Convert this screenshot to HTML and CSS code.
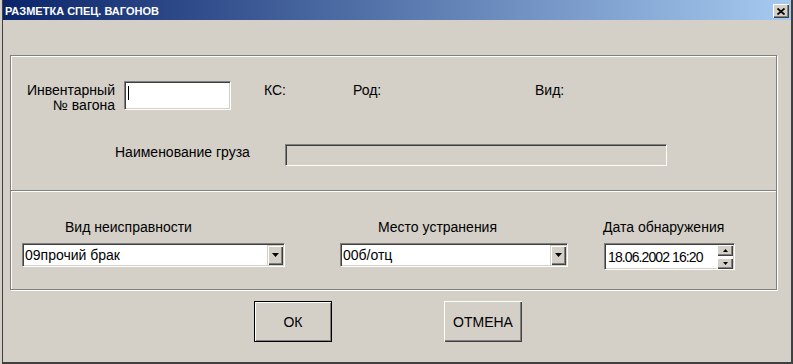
FILE: index.html
```html
<!DOCTYPE html>
<html lang="ru">
<head>
    <meta charset="UTF-8">
    <title>Разметка спец. вагонов</title>
    <link rel="stylesheet" href="styles.css">
</head>
<body>
    <div class="window">
        <div class="titlebar">
            <span class="title">РАЗМЕТКА СПЕЦ. ВАГОНОВ</span>
            <span class="close-btn">
                <svg width="8" height="7" viewBox="0 0 8 7">
                    <path d="M0.5 0.5 L7.5 6.5 M7.5 0.5 L0.5 6.5" stroke="#000" stroke-width="1.7" fill="none"/>
                </svg>
            </span>
        </div>

        <div class="client">
            <div class="group">
                <div class="section section-top">
                    <div class="row row-wagon">
                        <div class="label-block">Инвентарный<br>№ вагона</div>
                        <div class="field wagon-field"><span class="caret"></span></div>
                        <span class="info info-ks">КС:</span>
                        <span class="info info-rod">Род:</span>
                        <span class="info">Вид:</span>
                    </div>
                    <div class="row row-cargo">
                        <span class="cargo-label">Наименование груза</span>
                        <div class="field cargo-field"></div>
                    </div>
                </div>

                <div class="section section-bottom">
                    <div class="col col-defect">
                        <div class="col-label">Вид неисправности</div>
                        <div class="combo">
                            <span class="combo-text">09прочий брак</span>
                            <span class="drop-btn">
                                <svg width="7" height="4" viewBox="0 0 7 4"><path d="M0 0 H7 L3.5 4 Z" fill="#000"/></svg>
                            </span>
                        </div>
                    </div>
                    <div class="col col-place">
                        <div class="col-label">Место устранения</div>
                        <div class="combo">
                            <span class="combo-text">00б/отц</span>
                            <span class="drop-btn">
                                <svg width="7" height="4" viewBox="0 0 7 4"><path d="M0 0 H7 L3.5 4 Z" fill="#000"/></svg>
                            </span>
                        </div>
                    </div>
                    <div class="col col-date">
                        <div class="col-label">Дата обнаружения</div>
                        <div class="date-field">
                            <span class="date-text">18.06.2002 16:20</span>
                            <span class="spinner">
                                <span class="spin-btn">
                                    <svg width="5" height="3" viewBox="0 0 5 3"><path d="M0 3 H5 L2.5 0 Z" fill="#000"/></svg>
                                </span>
                                <span class="spin-btn">
                                    <svg width="5" height="3" viewBox="0 0 5 3"><path d="M0 0 H5 L2.5 3 Z" fill="#000"/></svg>
                                </span>
                            </span>
                        </div>
                    </div>
                </div>
            </div>

            <div class="buttons">
                <button class="btn btn-default">ОК</button>
                <button class="btn">ОТМЕНА</button>
            </div>
        </div>
    </div>
</body>
</html>
```

FILE: styles.css
```css
body {
    margin: 0;
    background: #d4d0c8;
    font-family: "Liberation Sans", Arial, sans-serif;
    font-size: 14px;
    color: #000;
}

.window {
    margin-left: 2px;
    width: 791px;
    height: 364px;
    box-sizing: border-box;
    border-left: 1px solid #404040;
    border-right: 2px solid #404040;
    border-bottom: 2px solid #404040;
    background: #d4d0c8;
}

.titlebar {
    height: 20px;
    display: flex;
    align-items: flex-start;
    background: linear-gradient(to right, #0a246a, #a6caf0);
}

.title {
    color: #fff;
    font-weight: bold;
    font-size: 11px;
    line-height: 20px;
    padding-left: 2px;
    padding-top: 1px;
}

.close-btn {
    margin-left: auto;
    margin-top: 4px;
    margin-right: 2px;
    width: 16px;
    height: 14px;
    box-sizing: border-box;
    background: #d4d0c8;
    box-shadow: inset 1px 1px 0 #fff, inset -1px -1px 0 #404040, inset -2px -2px 0 #808080;
    display: flex;
    align-items: center;
    justify-content: center;
}

.client {
    padding: 35px 0 0 7px;
}

/* etched group frame */
.group {
    width: 767px;
    height: 235px;
    box-sizing: border-box;
    border: 1px solid #808080;
    box-shadow: inset 1px 1px 0 #fff, 1px 1px 0 #fff;
}

.section-top {
    height: 135px;
    box-sizing: border-box;
    padding-top: 25px;
    border-bottom: 1px solid #808080;
}

.section-bottom {
    border-top: 1px solid #fff;
    padding: 28px 0 0 11px;
    display: flex;
}

.row {
    display: flex;
    align-items: flex-start;
}

.label-block {
    width: 104px;
    text-align: right;
    line-height: 15px;
    margin-top: 2px;
}

/* sunken edit box */
.field {
    box-sizing: border-box;
    border: 1px solid;
    border-color: #808080 #fff #fff #808080;
    box-shadow: inset 1px 1px 0 #404040, inset -1px -1px 0 #d4d0c8;
}

.wagon-field {
    margin-left: 9px;
    width: 107px;
    height: 29px;
    background: #fff;
    padding: 1px;
}

.caret {
    display: block;
    margin: 3px 0 0 2px;
    width: 1px;
    height: 14px;
    background: #000;
}

.info {
    line-height: 15px;
    margin-top: 2px;
}

.info-ks {
    margin-left: 33px;
    width: 89px;
}

.info-rod {
    width: 182px;
}

.row-cargo {
    margin-top: 31px;
}

.cargo-label {
    margin-left: 104px;
    width: 170px;
    line-height: 15px;
    margin-top: 1px;
}

.cargo-field {
    width: 382px;
    height: 22px;
    background: #d4d0c8;
}

.col-label {
    line-height: 15px;
    margin-bottom: 8px;
    white-space: nowrap;
}

.col-defect {
    width: 263px;
}

.col-defect .col-label {
    padding-left: 43px;
}

.col-place {
    margin-left: 55px;
    width: 228px;
}

.col-place .col-label {
    padding-left: 38px;
}

.col-date {
    margin-left: 36px;
    width: 131px;
}

.col-date .col-label {
    margin-left: -1px;
}

.combo,
.date-field {
    box-sizing: border-box;
    display: flex;
    align-items: center;
    background: #fff;
    padding: 1px;
    border: 1px solid;
    border-color: #808080 #fff #fff #808080;
    box-shadow: inset 1px 1px 0 #404040, inset -1px -1px 0 #d4d0c8;
}

.combo {
    height: 24px;
}

.combo-text {
    padding-left: 1px;
    white-space: nowrap;
}

.drop-btn {
    margin-left: auto;
    width: 16px;
    height: 20px;
    box-sizing: border-box;
    background: #d4d0c8;
    box-shadow: inset 1px 1px 0 #d4d0c8, inset 2px 2px 0 #fff, inset -1px -1px 0 #404040, inset -2px -2px 0 #808080;
    display: flex;
    align-items: center;
    justify-content: center;
}

.date-field {
    height: 27px;
}

.date-text {
    padding-left: 2px;
    font-size: 14px;
    letter-spacing: -0.9px;
    white-space: nowrap;
}

.spinner {
    margin-left: auto;
    display: flex;
    flex-direction: column;
    gap: 2px;
}

.spin-btn {
    width: 16px;
    height: 11px;
    box-sizing: border-box;
    background: #d4d0c8;
    box-shadow: inset 1px 1px 0 #fff, inset -1px -1px 0 #404040, inset -2px -2px 0 #808080;
    display: flex;
    align-items: center;
    justify-content: center;
}

.buttons {
    display: flex;
    gap: 112px;
    margin-top: 11px;
    padding-left: 244px;
}

.btn {
    width: 78px;
    height: 41px;
    box-sizing: border-box;
    padding: 0;
    border: none;
    background: #d4d0c8;
    font-family: "Liberation Sans", Arial, sans-serif;
    font-size: 14px;
    color: #000;
    box-shadow: inset 1px 1px 0 #fff, inset -1px -1px 0 #404040, inset -2px -2px 0 #808080;
}

.btn-default {
    border: 1px solid #000;
    box-shadow: inset 1px 1px 0 #fff, inset -1px -1px 0 #808080;
}
```
